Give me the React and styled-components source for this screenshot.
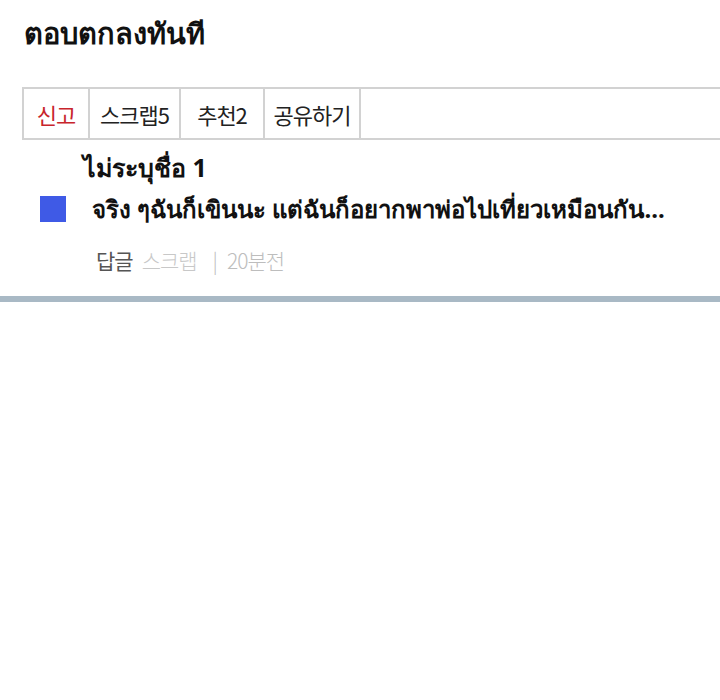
import styled, { createGlobalStyle } from "styled-components";

const GlobalStyle = createGlobalStyle`
    html, body {
        margin: 0;
        padding: 0;
        background: #ffffff;
    }
    body {
        font-family: "Noto Sans", "DejaVu Sans", "Noto Sans CJK KR", sans-serif;
        color: #111;
    }
`;

// widths follow the cells in the original bar (right border included)
const tabs = [
    { label: "신고", width: 66, alert: true },
    { label: "스크랩5", width: 91 },
    { label: "추천2", width: 84 },
    { label: "공유하기", width: 96 },
];

const App = () => {
    return (
        <Page>
            <GlobalStyle />
            <Title>ตอบตกลงทันที</Title>
            <TabBar>
                {tabs.map((tab) => (
                    <Tab key={tab.label} $width={tab.width} $alert={tab.alert}>
                        {tab.label}
                    </Tab>
                ))}
                <TabFill />
            </TabBar>
            <Comment>
                <Author>ไม่ระบุชื่อ 1</Author>
                <Body>
                    <Avatar />
                    <Text>จริง ๆฉันก็เขินนะ แต่ฉันก็อยากพาพ่อไปเที่ยวเหมือนกัน...</Text>
                </Body>
                <Meta>
                    <Reply>답글</Reply>
                    <Scrap>스크랩</Scrap>
                    <Sep>|</Sep>
                    <Time>20분전</Time>
                </Meta>
            </Comment>
            <Divider />
        </Page>
    );
};

const Page = styled.div`
    width: 720px;
    overflow: hidden;
`;

const Title = styled.h1`
    margin: 0;
    padding: 13px 0 0 24px;
    height: 87px;
    box-sizing: border-box;
    font-size: 29px;
    font-weight: 700;
    line-height: 40px;
`;

const TabBar = styled.div`
    display: flex;
    margin-left: 22px;
    height: 53px;
    width: 720px;
    box-sizing: border-box;
    border: 2px solid #d2d2d2;
`;

const Tab = styled.div`
    display: flex;
    align-items: center;
    justify-content: center;
    width: ${(p) => p.$width}px;
    box-sizing: border-box;
    border-right: 2px solid #d2d2d2;
    font-family: "Noto Sans CJK KR", sans-serif;
    font-size: 22px;
    font-weight: 400;
    letter-spacing: -1px;
    color: ${(p) => (p.$alert ? "#c8252c" : "#222")};
`;

const TabFill = styled.div`
    flex: 1;
`;

const Comment = styled.div`
    display: flex;
    flex-direction: column;
    padding: 11px 0 22px 0;
`;

const Author = styled.div`
    padding-left: 83px;
    font-size: 25px;
    font-weight: 700;
    line-height: 32px;
`;

const Body = styled.div`
    display: flex;
    align-items: center;
    gap: 26px;
    padding-left: 40px;
    margin-top: 12px;
`;

const Avatar = styled.div`
    width: 26px;
    height: 26px;
    background: #3f5ae6;
    flex-shrink: 0;
`;

const Text = styled.div`
    font-size: 24px;
    font-weight: 700;
    line-height: 28px;
    white-space: nowrap;
`;

const Meta = styled.div`
    display: flex;
    align-items: center;
    padding-left: 96px;
    margin-top: 23px;
    height: 28px;
    font-family: "Noto Sans CJK KR", sans-serif;
    font-size: 21px;
    font-weight: 300;
    letter-spacing: -1px;
`;

const Reply = styled.span`
    color: #555;
    font-weight: 400;
    margin-right: 9px;
`;

const Scrap = styled.span`
    color: #c8c8c8;
    margin-right: 16px;
`;

const Sep = styled.span`
    color: #bdbdbd;
    margin-right: 10px;
`;

const Time = styled.span`
    color: #bdbdbd;
`;

const Divider = styled.div`
    height: 6px;
    background: #a9b9c5;
`;

export default App;
